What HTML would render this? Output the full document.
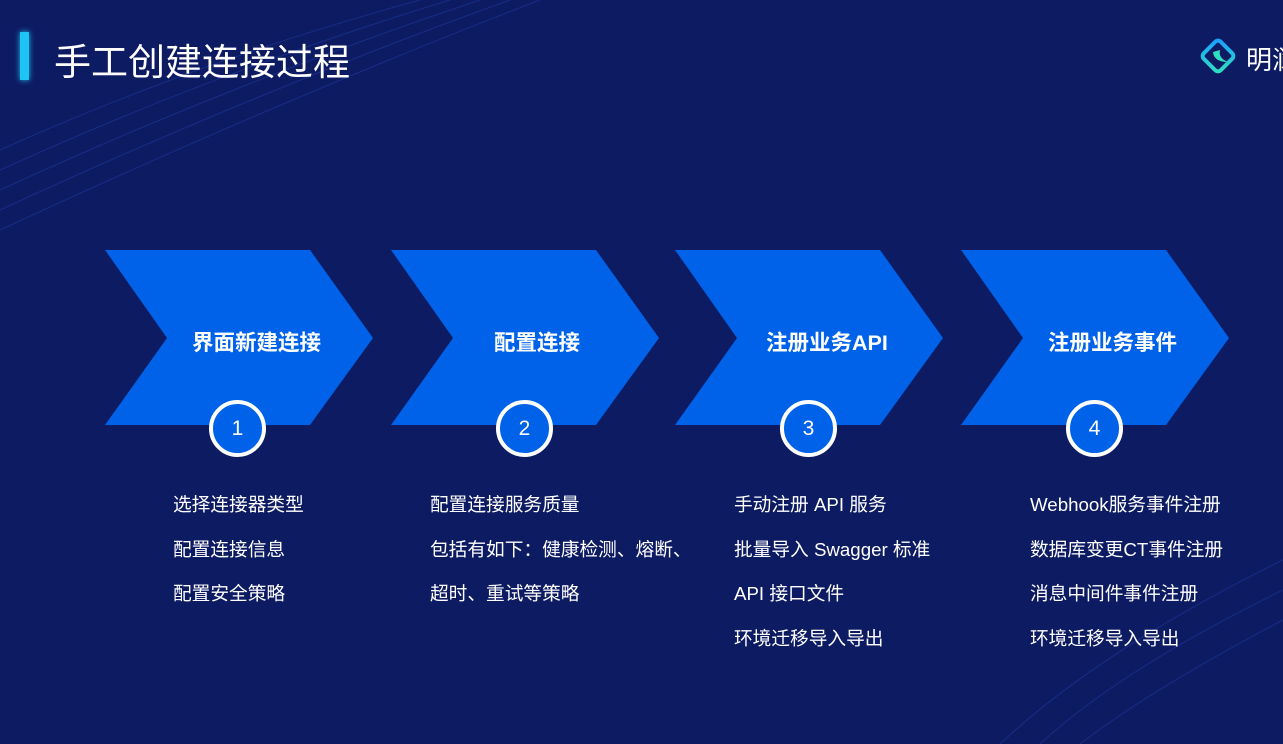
<!DOCTYPE html>
<html><head><meta charset="utf-8"><style>
body{margin:0;width:1283px;height:744px;overflow:hidden;background:#0d1b63;font-family:"Liberation Sans","Noto Sans CJK SC",sans-serif;position:relative}
.t{position:absolute;color:#fff;white-space:nowrap}
.bar{position:absolute;left:20px;top:32px;width:9px;height:48px;background:#1fc4f5;box-shadow:0 0 6px #1fc4f5}
.lbl{position:absolute;color:#fff;font-weight:bold;font-size:21.5px;top:326px;white-space:nowrap}
.c{position:absolute;top:400px;width:49px;height:49px;border:4px solid #fff;border-radius:50%;background:#0062e8;color:#fff;font-size:21px;text-align:center;line-height:49px}
.li{position:absolute;color:#fff;font-size:18.7px;line-height:44.5px;top:483px;white-space:nowrap}
</style></head><body>
<svg width="1283" height="744" style="position:absolute;left:0;top:0">
<defs><linearGradient id="g" x1="0" y1="0" x2="1" y2="1"><stop offset="0" stop-color="#1aa0ff"/><stop offset="1" stop-color="#2ee0c0"/></linearGradient></defs>
<g fill="none" stroke="#1d3a9a" stroke-width="1" opacity="0.6">
<path d="M0 150 Q200 60 420 0"/><path d="M0 170 Q220 70 450 0"/><path d="M0 190 Q240 80 480 0"/><path d="M0 210 Q260 90 510 0"/><path d="M0 230 Q280 100 540 0"/>
<path d="M1283 560 Q1100 650 1000 744"/><path d="M1283 590 Q1120 670 1040 744"/><path d="M1283 620 Q1150 690 1080 744"/>
</g>
<g fill="#0062e8">
<polygon points="105,250 310,250 373,338 310,425 105,425 167,338"/>
<polygon points="391,250 596,250 659,338 596,425 391,425 453,338"/>
<polygon points="675,250 880,250 943,338 880,425 675,425 737,338"/>
<polygon points="961,250 1166,250 1229,338 1166,425 961,425 1023,338"/>
</g>
<g transform="translate(1218,56) rotate(45)"><rect x="-12" y="-12" width="24" height="24" rx="4" fill="none" stroke="url(#g)" stroke-width="4"/></g>
<path d="M1213 52 Q1214 62 1228 62 Q1218 58 1220 50 Z" fill="#2ee0c0"/>
</svg>
<div class="bar"></div>
<div class="t" style="left:54px;top:32px;font-size:37px">手工创建连接过程</div>
<div class="t" style="left:1246px;top:40px;font-size:26px">明澜</div>
<div class="lbl" style="left:192px">界面新建连接</div>
<div class="lbl" style="left:494px">配置连接</div>
<div class="lbl" style="left:766px">注册业务API</div>
<div class="lbl" style="left:1048px">注册业务事件</div>
<div class="c" style="left:209px">1</div>
<div class="c" style="left:496px">2</div>
<div class="c" style="left:780px">3</div>
<div class="c" style="left:1066px">4</div>
<div class="li" style="left:173px">选择连接器类型<br>配置连接信息<br>配置安全策略</div>
<div class="li" style="left:430px">配置连接服务质量<br>包括有如下：健康检测、熔断、<br>超时、重试等策略</div>
<div class="li" style="left:734px">手动注册 API 服务<br>批量导入 Swagger 标准<br>API 接口文件<br>环境迁移导入导出</div>
<div class="li" style="left:1030px">Webhook服务事件注册<br>数据库变更CT事件注册<br>消息中间件事件注册<br>环境迁移导入导出</div>
</body></html>
